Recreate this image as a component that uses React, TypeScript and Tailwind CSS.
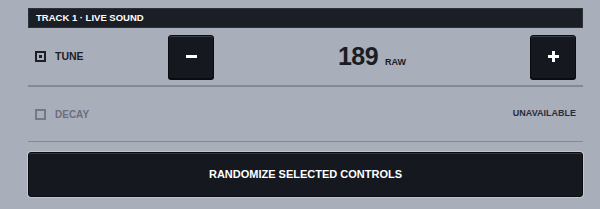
import React from 'react';

const font = { fontFamily: '"Liberation Sans", Arial, sans-serif' };

const StepButton: React.FC<{ kind: 'minus' | 'plus' }> = ({ kind }) => (
    <button className="relative flex h-[44px] w-[46px] items-center justify-center rounded-[3px] border border-[#0b0c10] bg-[#16181f] shadow-[inset_0_1px_0_#3a3d47,0_1px_0_#0b0c10]">
        {kind === 'minus' ? (
            <span className="block h-[3px] w-[11px] bg-white" />
        ) : (
            <span className="relative block h-[11px] w-[11px]">
                <span className="absolute left-0 top-[4px] h-[3px] w-[11px] bg-white" />
                <span className="absolute left-[4px] top-0 h-[11px] w-[3px] bg-white" />
            </span>
        )}
    </button>
);

const Checkbox: React.FC<{ checked: boolean; disabled?: boolean }> = ({ checked, disabled }) => (
    <span
        className={`flex h-[11px] w-[11px] items-center justify-center border-2 ${
            disabled ? 'border-[#757985]' : 'border-[#1d1f27]'
        }`}
    >
        {checked && <span className="block h-[3px] w-[3px] bg-[#1d1f27]" />}
    </span>
);

export default function App() {
    return (
        <div className="h-[209px] w-[600px] bg-[#a9aebb] pt-[8px]" style={font}>
            <div className="ml-[28px] w-[555px]">
                <div className="flex h-[20px] items-center border border-[#2d3039] bg-[#1c1e26] px-[7px] text-[9.5px] font-bold text-white">
                    TRACK 1 · LIVE SOUND
                </div>

                <div className="flex h-[59px] items-center border-b-2 border-[#848997] px-[7px]">
                    <div className="flex w-[133px] items-center gap-[9px]">
                        <Checkbox checked />
                        <span className="text-[10.5px] font-bold text-[#1d1f27]">TUNE</span>
                    </div>
                    <StepButton kind="minus" />
                    <div className="flex flex-1 items-baseline justify-center gap-[7px]">
                        <span className="text-[25px] font-bold tracking-[-0.5px] text-[#1b1d24]">189</span>
                        <span className="text-[9px] font-bold text-[#1b1d24]">RAW</span>
                    </div>
                    <StepButton kind="plus" />
                </div>

                <div className="flex h-[55px] items-center justify-between border-b border-[#848997] px-[7px]">
                    <div className="flex items-center gap-[9px]">
                        <Checkbox checked={false} disabled />
                        <span className="text-[10px] font-bold text-[#6b6f7b]">DECAY</span>
                    </div>
                    <span className="text-[9px] font-bold text-[#2a2d36]">UNAVAILABLE</span>
                </div>

                <button className="mt-[10px] flex h-[45px] w-full items-center justify-center rounded-[3px] border border-[#0b0c10] bg-[#16181f] text-[11px] font-bold text-white shadow-[0_0_0_1px_#c3c7d1,inset_0_1px_0_#33363f]">
                    RANDOMIZE SELECTED CONTROLS
                </button>
            </div>
        </div>
    );
}
